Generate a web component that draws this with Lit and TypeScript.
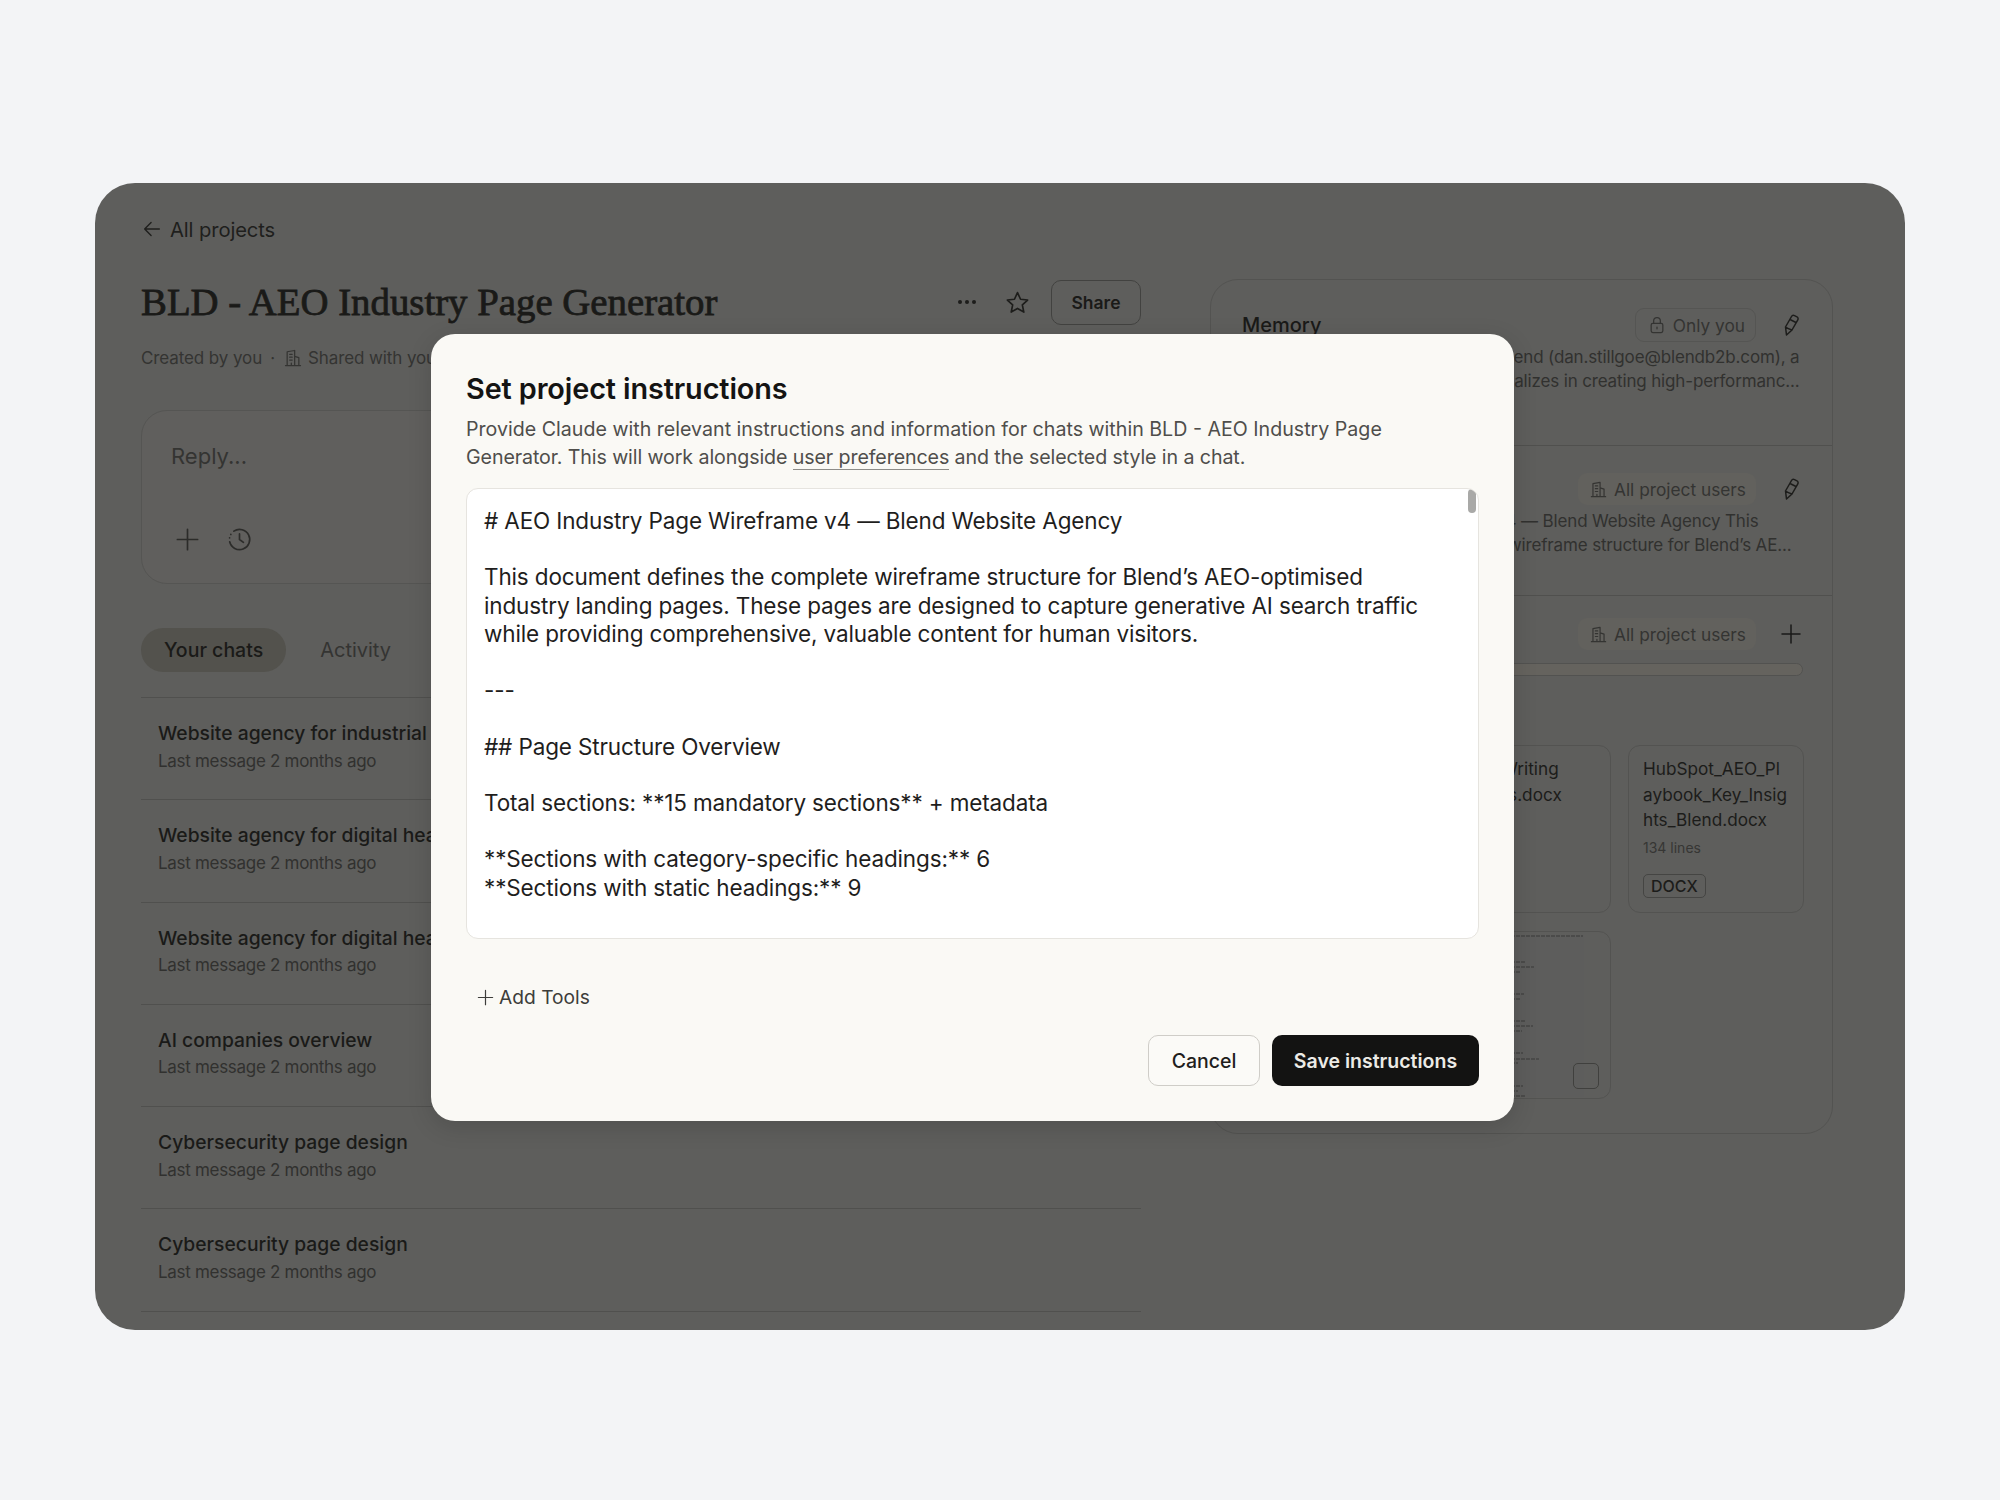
import { LitElement, html, css, svg } from "lit";
import { customElement } from "lit/decorators.js";

const icon = (size: number, body: unknown, cls = "") => html`<svg class="ic ${cls}" width=${size} height=${size} viewBox="0 0 24 24" fill="none" stroke="currentColor" stroke-width="1.5" stroke-linecap="round" stroke-linejoin="round">${body}</svg>`;
const building = svg`<path d="M5 21V4.500L14 3v18M14 10l5 1.500V21M3 21h18M8 7.500h3M8 11h3M8 14.500h3M10 21v-3"/>`;
const plus = svg`<path d="M12 3v18M3 12h18"/>`;
const pencil = svg`<path d="M7.500 22 6.500 14l6-10.500c.6-1.100 1.800-1.500 3-.9l2.500 1.300c1.100.6 1.400 1.900.8 3L13 17zM11 6.500l6 3M6.500 14c1.800 1.300 4.200 2.300 6.500 3"/>`;

const CHATS = [
  "Website agency for industrial manufacturers",
  "Website agency for digital health companies",
  "Website agency for digital health startups",
  "AI companies overview",
  "Cybersecurity page design",
  "Cybersecurity page design",
];

const THUMB_LINES: [number, number][] = [
  [4, 147], [30, 89], [35, 98], [40, 85], [62, 88], [67, 84], [89, 89], [94, 97], [99, 86],
  [121, 87], [127, 103], [131, 82], [154, 87], [159, 82], [164, 89],
];

const INSTRUCTIONS = `# AEO Industry Page Wireframe v4 — Blend Website Agency

This document defines the complete wireframe structure for Blend’s AEO-optimised industry landing pages. These pages are designed to capture generative AI search traffic while providing comprehensive, valuable content for human visitors.

---

## Page Structure Overview

Total sections: **15 mandatory sections** + metadata

**Sections with category-specific headings:** 6
**Sections with static headings:** 9`;

@customElement("app-root")
export class AppRoot extends LitElement {
  static styles = css`
    :host { display: block; min-height: 1500px; background: #f3f4f6; font-family: Inter, "Liberation Sans", sans-serif; padding: 183px 95px 0; box-sizing: border-box; }
    * { box-sizing: border-box; }
    .frame { position: relative; height: 1147px; border-radius: 40px; background: #5e5e5c; overflow: hidden; color: #151514; }
    .page { display: grid; grid-template-columns: 1000px 623px; column-gap: 69px; align-content: start; padding: 0 72px 0 46px; height: 100%; }
    .ic { display: block; flex: none; }
    .crumb { grid-column: 1 / -1; display: flex; align-items: center; gap: 7px; height: 92px; font-size: 20.200px; color: #1f1f1d; letter-spacing: -.1px; }
    .left { display: flex; flex-direction: column; }
    .head { display: flex; align-items: center; height: 44px; margin-top: 5px; }
    h1 { margin: 0; flex: 1; font: 400 38.800px/44px "Liberation Serif", serif; -webkit-text-stroke: .8px #1a1a18; color: #1a1a18; white-space: nowrap; }
    .dots { display: flex; gap: 3px; margin-right: 27.500px; }
    .dots i { width: 4px; height: 4px; border-radius: 50%; background: #1d1d1b; }
    .star { margin-right: 20.500px; color: #1d1d1b; }
    .share { width: 90px; height: 45px; display: flex; align-items: center; justify-content: center; border: 1px solid #424240; border-radius: 10px; font-size: 17.500px; font-weight: 600; color: #1a1a18; }
    .meta { display: flex; align-items: center; gap: 8px; margin-top: 22px; font-size: 17px; color: #343432; height: 24px; white-space: nowrap; letter-spacing: -.1px; }
    .meta .shared { margin-left: -3px; }
    .reply { margin-top: 39.500px; height: 174px; border: 1px solid #555553; border-radius: 26px; padding: 30px 29px 0; background: #605f5d; }
    .reply-text { font-size: 22px; line-height: 30px; color: #343432; }
    .reply-tools { display: flex; align-items: center; gap: 24.500px; margin: 55.500px 0 0 3px; color: #2c2c2a; }
    .tabs { display: flex; align-items: center; gap: 34px; margin-top: 44.500px; font-size: 19.500px; font-weight: 500; }
    .tab-on { height: 44px; padding: 0 23px; display: flex; align-items: center; border-radius: 22px; background: #53524d; color: #1a1a18; }
    .tab-off { color: #343432; font-weight: 400; font-size: 20px; }
    .list { margin-top: 25px; }
    .row { height: 102.300px; border-top: 1.500px solid #50504e; padding: 21px 17px 0; }
    .row-title { font-size: 19.300px; line-height: 28.500px; font-weight: 500; color: #1a1a18; white-space: nowrap; }
    .row-sub { font-size: 17px; line-height: 27px; color: #31312f; letter-spacing: -.3px; }
    .row-end { border-top: 1.500px solid #50504e; }
    .panel { height: 855px; margin-top: 4px; border: 1.500px solid #535351; border-radius: 28px; display: flex; flex-direction: column; }
    .sec { border-bottom: 1.500px solid #50504e; padding: 0 29px 0 31px; position: relative; }
    .sec-1 { height: 166px; padding-top: 28px; }
    .sec-2 { height: 149.500px; padding-top: 26px; }
    .sec-3 { border-bottom: 0; padding-top: 21.500px; flex: 1; }
    .sec-top { display: flex; align-items: center; height: 34px; gap: 23px; font-size: 20px; font-weight: 500; color: #1a1a18; }
    .sec-top .name { flex: 1; }
    .pill { display: flex; align-items: center; gap: 6px; height: 32px; padding: 0 10px 0 11px; border-radius: 9px; background: #62615d; font-size: 17.300px; color: #343432; white-space: nowrap; font-weight: 400; }
    .pill.line { background: transparent; border: 1.500px solid #555553; height: 34px; }
    .pencil { color: #1d1d1b; }
    .txt { margin: 3px 3.500px 0 0; font-size: 17px; line-height: 24px; color: #31312f; white-space: nowrap; letter-spacing: -.15px; }
    .txt .l1 { display: flex; justify-content: flex-end; }
    .txt .short { margin-right: 41px; }
    .txt .mid { margin-right: 8px; }
    .bar { height: 13px; margin: 12px 0 0; border: 1.500px solid #525250; border-radius: 7px; background: #65635e; }
    .grid { display: grid; grid-template-columns: repeat(3, 175.500px); gap: 18px 17.500px; margin-top: 69px; }
    .card { height: 168px; border: 1.500px solid #535351; border-radius: 12px; padding: 10px 13px 0 14px; font-size: 17.200px; line-height: 25.500px; color: #1c1c1a; position: relative; overflow: hidden; word-break: break-all; }
    .card.spaced { word-break: normal; }
    .card .lines { font-size: 14px; line-height: 24px; color: #363634; margin-top: 3px; }
    .tag { display: inline-block; margin-top: 14px; padding: 0 7px; border: 1.500px solid #454543; border-radius: 5px; font-size: 16px; line-height: 22px; color: #1c1c1a; font-weight: 500; }
    .thumb { position: absolute; left: 0; top: 0; width: 174px; height: 168px; }
    .check { position: absolute; right: 11px; bottom: 9px; width: 26px; height: 26px; border: 1.500px solid #40403e; border-radius: 5px; }

    .modal { position: absolute; left: 336px; top: 151px; width: 1083px; height: 787px; background: #faf9f5; border-radius: 24px; padding: 37px 35px 0; box-shadow: 0 6px 24px rgba(0,0,0,.14); display: flex; flex-direction: column; }
    h2 { margin: 0; font-size: 28.800px; line-height: 36px; font-weight: 600; color: #141413; letter-spacing: -.1px; }
    .desc { margin: 8px 0 0; max-width: 990px; font-size: 19.640px; line-height: 28px; color: #4f4e4b; }
    .desc a { color: inherit; text-decoration: none; border-bottom: 1px solid #8d8c88; }
    .tight { letter-spacing: -.1px; }
    .area { position: relative; margin-top: 17px; height: 451px; background: #fff; border: 1.500px solid #e6e4df; border-radius: 12px; padding: 18px 45px 18px 17px; font-size: 22.500px; letter-spacing: -.14px; line-height: 28.200px; color: #1f1e1d; white-space: pre-wrap; overflow: hidden; }
    .scroll { position: absolute; right: 2px; top: 0; width: 8px; height: 24px; border-radius: 4px; background: #a9a9a7; }
    .tools { display: flex; align-items: center; gap: 4px; margin: 44px 0 0 10px; height: 28px; font-size: 19.200px; color: #3d3d3a; }
    .actions { display: flex; justify-content: flex-end; gap: 12px; margin-top: 24px; }
    .btn { height: 51px; display: flex; align-items: center; justify-content: center; border-radius: 10px; font-size: 19.500px; font-weight: 500; }
    .cancel { width: 112px; border: 1.500px solid #cfcdc8; color: #1f1e1d; background: #fbfaf7; }
    .save { width: 207px; background: #131312; color: #ecebe6; font-weight: 600; }
  `;

  render() {
    return html`
      <div class="frame">
        <div class="page">
          <div class="crumb">
            ${icon(22, svg`<path d="M20 12H4M11 5l-7 7 7 7"/>`)}
            <span>All projects</span>
          </div>
          <div class="left">
            <div class="head">
              <h1>BLD - AEO Industry Page Generator</h1>
              <div class="dots"><i></i><i></i><i></i></div>
              ${icon(27, svg`<path d="M12 3.200l2.700 5.900 6.300.7-4.700 4.300 1.300 6.400L12 17.300l-5.600 3.200 1.300-6.400L3 9.800l6.300-.7z"/>`, "star")}
              <div class="share">Share</div>
            </div>
            <div class="meta">
              <span>Created by you</span><span>·</span>
              ${icon(20, building)}
              <span class="shared">Shared with your organization</span>
            </div>
            <div class="reply">
              <div class="reply-text">Reply...</div>
              <div class="reply-tools">
                ${icon(27, plus)}
                ${icon(27, svg`<path d="M7 4.600A9 9 0 1 1 3.300 14"/><path d="M3.200 10.500v.01M4.300 7.500v.01M12 7v5l3.500 2.500" />`)}
              </div>
            </div>
            <div class="tabs">
              <div class="tab-on">Your chats</div>
              <div class="tab-off">Activity</div>
            </div>
            <div class="list">
              ${CHATS.map(
                (t) => html`<div class="row">
                  <div class="row-title">${t}</div>
                  <div class="row-sub">Last message 2 months ago</div>
                </div>`,
              )}
              <div class="row-end"></div>
            </div>
          </div>
          <div class="panel">
            <div class="sec sec-1">
              <div class="sec-top">
                <span class="name">Memory</span>
                <div class="pill line">
                  ${icon(20, svg`<rect x="5" y="10" width="14" height="11" rx="2"/><path d="M8 10V7a4 4 0 0 1 8 0v3M12 14.500v2"/>`)}
                  <span>Only you</span>
                </div>
                ${icon(24, pencil, "pencil")}
              </div>
              <div class="txt">
                <span class="l1">Dan Stillgoe is a director at Blend (dan.stillgoe@blendb2b.com), a</span>
                <span class="l1">website agency that specializes in creating high-performanc...</span>
              </div>
            </div>
            <div class="sec sec-2">
              <div class="sec-top">
                <span class="name">Instructions</span>
                <div class="pill">${icon(19, building)}<span>All project users</span></div>
                ${icon(24, pencil, "pencil")}
              </div>
              <div class="txt">
                <span class="l1 short"># AEO Industry Page Wireframe v4 — Blend Website Agency This</span>
                <span class="l1 mid">document defines the complete wireframe structure for Blend’s AE...</span>
              </div>
            </div>
            <div class="sec sec-3">
              <div class="sec-top">
                <span class="name">Files</span>
                <div class="pill">${icon(19, building)}<span>All project users</span></div>
                ${icon(24, plus)}
              </div>
              <div class="bar"></div>
              <div class="grid">
                <div class="card">Blend_Tone_of_Voice.docx</div>
                <div class="card spaced">Blend Writing Reviews.docx</div>
                <div class="card">
                  HubSpot_AEO_Playbook_Key_Insights_Blend.docx
                  <div class="lines">134 lines</div>
                  <span class="tag">DOCX</span>
                </div>
                <div class="card"></div>
                <div class="card">
                  <svg class="thumb" viewBox="0 0 174 168" fill="none" stroke="#2e2e2c" stroke-width="1" stroke-dasharray="4 1" opacity=".75">
                    ${THUMB_LINES.map(([y, x]) => svg`<line x1="60" x2=${x} y1=${y} y2=${y}/>`)}
                  </svg>
                  <div class="check"></div>
                </div>
              </div>
            </div>
          </div>
        </div>

        <div class="modal">
          <h2>Set project instructions</h2>
          <p class="desc">Provide Claude with relevant instructions and information for chats within BLD - AEO Industry Page <span class="tight">Generator. This will work alongside <a>user preferences</a> and the selected style in a chat.</span></p>
          <div class="area">${INSTRUCTIONS}<div class="scroll"></div></div>
          <div class="tools">${icon(19, plus)}<span>Add Tools</span></div>
          <div class="actions">
            <div class="btn cancel">Cancel</div>
            <div class="btn save">Save instructions</div>
          </div>
        </div>
      </div>
    `;
  }
}
